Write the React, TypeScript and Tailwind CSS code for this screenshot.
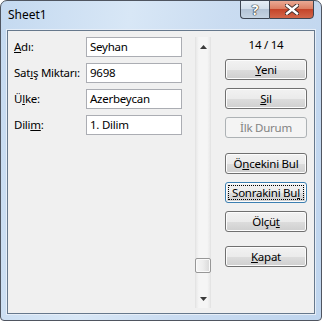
import React from 'react';

const font = { fontFamily: '"Segoe UI", "Noto Sans", "Open Sans", sans-serif' };

interface FieldProps {
  label: React.ReactNode;
  value: string;
}

const Field: React.FC<FieldProps> = ({ label, value }) => (
  <>
    <div className="h-[20px] flex items-center whitespace-nowrap">{label}</div>
    <div className="h-[20px] border border-[#abadb3] bg-white px-[3px] flex items-center whitespace-nowrap">{value}</div>
  </>
);

interface BtnProps {
  children: React.ReactNode;
  disabled?: boolean;
  focused?: boolean;
  className?: string;
}

const Btn: React.FC<BtnProps> = ({ children, disabled, focused, className = '' }) => {
  if (disabled) {
    return (
      <div className={`h-[21px] rounded-[3px] border border-[#adb2b5] bg-[#f4f4f4] text-[#838383] flex items-center justify-center whitespace-nowrap ${className}`}>
        {children}
      </div>
    );
  }
  return (
    <div
      className={`h-[21px] rounded-[3px] border ${focused ? 'border-[#3c7fb1]' : 'border-[#707070]'} bg-[linear-gradient(#f2f2f2_0%,#ebebeb_50%,#dddddd_51%,#cfcfcf_100%)] shadow-[inset_0_0_0_1px_#fcfcfc] flex items-center justify-center p-[2px] whitespace-nowrap ${className}`}
    >
      {focused ? (
        <div className="w-full h-full border border-dotted border-black flex items-center justify-center">{children}</div>
      ) : (
        children
      )}
    </div>
  );
};

const App: React.FC = () => {
  return (
    <div style={font} className="w-[322px] h-[321px] text-[11.5px] tracking-[-0.25px] text-black">
      <div className="w-full h-full rounded-t-[7px] rounded-b-[4px] border border-[#4f5560] bg-[linear-gradient(100deg,#c4d9f0_0%,#d8e7f6_35%,#cadcf1_60%,#bfd5ee_100%)] flex flex-col px-[6px] pb-[6px]">
        {/* title bar */}
        <div className="h-[29px] flex items-start justify-between">
          <div className="pt-[6px] pl-[1px] text-[12px] leading-[16px] tracking-normal text-black">Sheet1</div>
          <div className="flex -mt-px mr-[1px]">
            <div className="w-[29px] h-[19px] rounded-bl-[4px] border border-[#3e4652] border-r-0 bg-[linear-gradient(#e5edf5_0%,#d3dfeb_45%,#b4c4d6_50%,#c5d4e3_100%)] flex items-center justify-center">
              <span className="text-[14px] font-bold text-white leading-none [text-shadow:0_0_1px_#222,0_0_1px_#222,0_0_1px_#222]">?</span>
            </div>
            <div className="w-[45px] h-[19px] rounded-br-[4px] border border-[#3e4652] bg-[linear-gradient(#eaa994_0%,#dd8064_45%,#c5452a_50%,#d2664a_100%)] flex items-center justify-center">
              <svg width="14" height="11" viewBox="0 0 14 11">
                <path d="M2 1.5 L12 9.5 M12 1.5 L2 9.5" stroke="#3a2a2a" strokeWidth="4.2" strokeLinecap="square" />
                <path d="M2 1.5 L12 9.5 M12 1.5 L2 9.5" stroke="#ffffff" strokeWidth="2.4" strokeLinecap="square" />
              </svg>
            </div>
          </div>
        </div>

        {/* client area */}
        <div className="flex-1 border border-[#66788c] bg-[#f0f0f0] shadow-[0_0_0_1px_#e6eef8] flex pt-[6px] pl-[6px]">
          <div className="w-[168px] grid grid-cols-[72px_96px] gap-y-[6px] content-start">
            <Field label={<span><u>A</u>dı:</span>} value="Seyhan" />
            <Field label={<span>Sat<u>ı</u>ş Miktarı:</span>} value="9698" />
            <Field label={<span>Ü<u>l</u>ke:</span>} value="Azerbeycan" />
            <Field label={<span>Dili<u>m</u>:</span>} value="1. Dilim" />
          </div>

          {/* scrollbar */}
          <div className="ml-[13px] w-[16px] h-[271px] border-x border-[#e4e4e4] bg-[linear-gradient(90deg,#e9e9e9_0%,#f5f5f5_20%,#f5f5f5_80%,#e9e9e9_100%)] flex flex-col">
            <div className="h-[17px] flex items-center justify-center pt-[2px]">
              <svg width="7" height="4" viewBox="0 0 7 4">
                <path d="M3.5 0 L7 4 L0 4 Z" fill="#3a3a3a" />
              </svg>
            </div>
            <div className="flex-1 flex flex-col justify-end pb-[18px]">
              <div className="h-[15px] -mx-px rounded-[2px] border border-[#979797] bg-[linear-gradient(90deg,#f6f6f6_0%,#ededed_50%,#d8d8d8_100%)] shadow-[inset_0_0_0_1px_#fafafa]" />
            </div>
            <div className="h-[17px] flex items-center justify-center pb-[1px]">
              <svg width="7" height="4" viewBox="0 0 7 4">
                <path d="M0 0 L7 0 L3.5 4 Z" fill="#3a3a3a" />
              </svg>
            </div>
          </div>

          {/* buttons */}
          <div className="ml-[14px] w-[82px] flex flex-col">
            <div className="h-[16px] leading-[16px] text-center">14 / 14</div>
            <Btn className="mt-[6px]"><span><u>Y</u>eni</span></Btn>
            <Btn className="mt-[8px]"><span><u>S</u>il</span></Btn>
            <Btn className="mt-[8px]" disabled>İlk Durum</Btn>
            <Btn className="mt-[15px]"><span>Ö<u>n</u>cekini Bul</span></Btn>
            <Btn className="mt-[8px]" focused><span>Sonrakini Bu<u>l</u></span></Btn>
            <Btn className="mt-[8px]"><span>Ölçü<u>t</u></span></Btn>
            <Btn className="mt-[14px]"><span><u>K</u>apat</span></Btn>
          </div>
        </div>
      </div>
    </div>
  );
};

export default App;
